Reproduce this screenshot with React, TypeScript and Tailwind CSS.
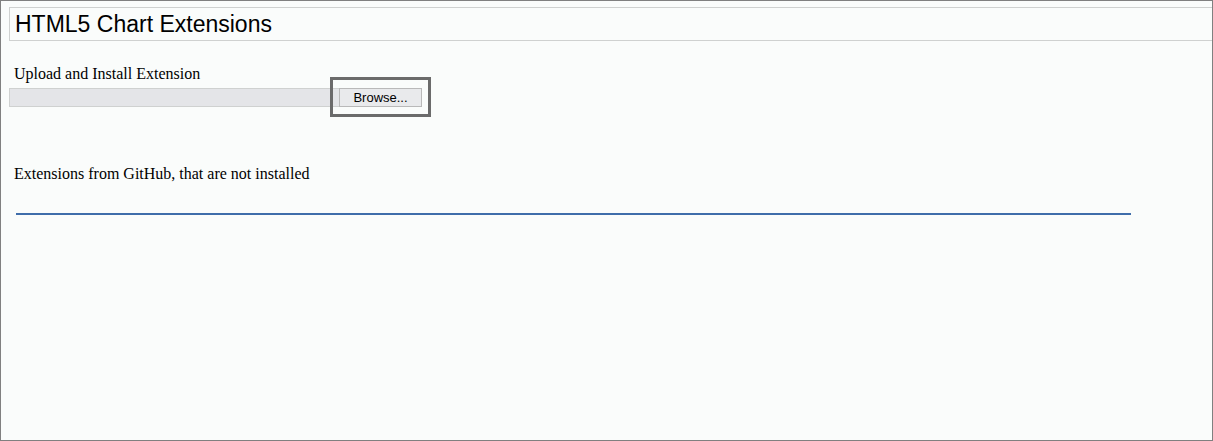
import React from 'react';

const serif = { fontFamily: '"Liberation Serif", "Times New Roman", serif' };

const App: React.FC = () => {
  return (
    <div className="w-[1213px] h-[441px] border border-[#808080] bg-[#fafcfb] overflow-hidden text-black">
      {/* заголовок страницы */}
      <div className="ml-2 mt-1.5 h-[34px] border-y border-l border-[#cfd1d0] flex items-center pl-[5px]">
        <h1 className="text-[23px] leading-none font-normal" style={{ fontFamily: '"Liberation Sans", Arial, sans-serif' }}>
          HTML5 Chart Extensions
        </h1>
      </div>

      <div className="ml-[13px] mt-6 text-[16px] leading-[18px]" style={serif}>
        Upload and Install Extension
      </div>

      <div className="relative ml-2 mt-[5px] flex w-[414px]">
        <div className="w-[331px] h-[19px] border border-[#cfd1d0] bg-[#e4e5e8]" />
        <button
          type="button"
          className="w-[83px] h-[19px] -ml-px border border-[#b9b9b9] bg-[#e9eaec] text-[13px] leading-none text-black"
          style={{ fontFamily: '"Liberation Sans", Arial, sans-serif' }}
        >
          Browse...
        </button>
        {/* рамка фокуса поверх кнопки */}
        <div className="absolute left-[321px] top-[-11px] w-[101px] h-[40px] border-[3px] border-[#6b6b6b] pointer-events-none" />
      </div>

      <div className="ml-[13px] mt-[58px] text-[16px] leading-[18px]" style={serif}>
        Extensions from GitHub, that are not installed
      </div>

      <div className="ml-[15px] mt-[30px] w-[1115px] h-[2px] bg-[#3f6daa]" />
    </div>
  );
};

export default App;
